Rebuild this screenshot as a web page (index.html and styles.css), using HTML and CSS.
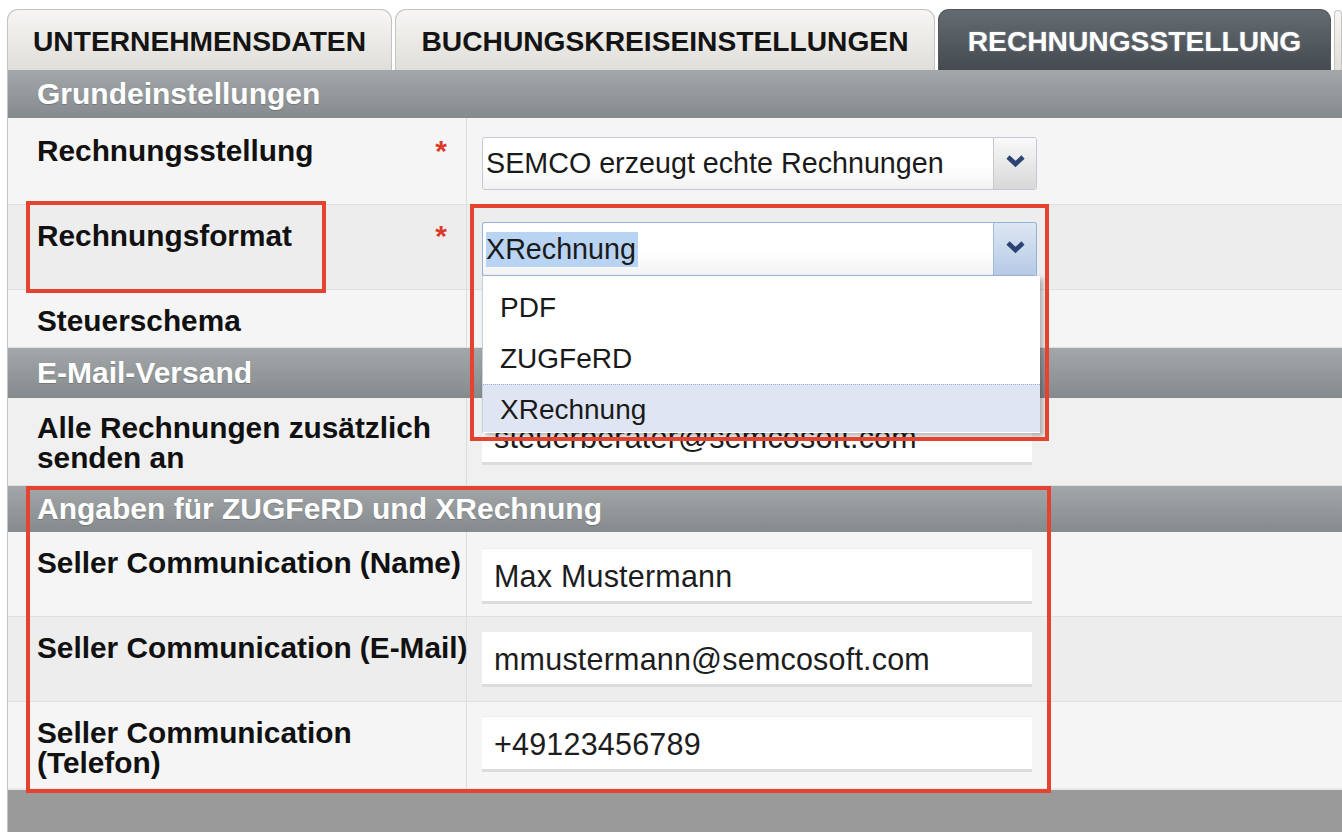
FILE: index.html
```html
<!DOCTYPE html>
<html lang="de">
<head>
<meta charset="utf-8">
<title>Rechnungsstellung</title>
<link rel="stylesheet" href="styles.css">
</head>
<body>
<div class="page">
  <div class="tabs">
    <div class="tab tab-1">UNTERNEHMENSDATEN</div>
    <div class="tab tab-2">BUCHUNGSKREISEINSTELLUNGEN</div>
    <div class="tab tab-3 active">RECHNUNGSSTELLUNG</div>
    <div class="tab tab-4"></div>
  </div>
  <div class="panel">
    <div class="section s1">Grundeinstellungen</div>
    <div class="row r1 light">
      <div class="label"><span>Rechnungsstellung</span><span class="req">*</span></div>
      <div class="field">
        <div class="select">
          <div class="select-value">SEMCO erzeugt echte Rechnungen</div>
          <div class="select-btn"><svg class="chev" width="21" height="14" viewBox="0 0 21 14"><polyline points="3,3 10.5,10 18,3" fill="none" stroke="#2b4474" stroke-width="4.6" stroke-linejoin="miter" stroke-linecap="butt"/></svg></div>
        </div>
      </div>
    </div>
    <div class="row r2 dark">
      <div class="label"><span>Rechnungsformat</span><span class="req">*</span></div>
      <div class="field">
        <div class="select open">
          <div class="select-value"><span class="hl">XRechnung</span></div>
          <div class="select-btn"><svg class="chev" width="21" height="14" viewBox="0 0 21 14"><polyline points="3,3 10.5,10 18,3" fill="none" stroke="#2b4474" stroke-width="4.6" stroke-linejoin="miter" stroke-linecap="butt"/></svg></div>
          <div class="options">
            <div class="option">PDF</div>
            <div class="option">ZUGFeRD</div>
            <div class="option selected">XRechnung</div>
          </div>
        </div>
      </div>
    </div>
    <div class="row r3 light">
      <div class="label"><span>Steuerschema</span></div>
      <div class="field"></div>
    </div>
    <div class="section s2">E-Mail-Versand</div>
    <div class="row r4 mid">
      <div class="label"><span>Alle Rechnungen zusätzlich<br>senden an</span></div>
      <div class="field"><div class="input">steuerberater@semcosoft.com</div></div>
    </div>
    <div class="section s3">Angaben für ZUGFeRD und XRechnung</div>
    <div class="row r5 light">
      <div class="label"><span>Seller Communication (Name)</span></div>
      <div class="field"><div class="input">Max Mustermann</div></div>
    </div>
    <div class="row r6 dark">
      <div class="label"><span>Seller Communication (E-Mail)</span></div>
      <div class="field"><div class="input">mmustermann@semcosoft.com</div></div>
    </div>
    <div class="row r7 light">
      <div class="label"><span>Seller Communication<br>(Telefon)</span></div>
      <div class="field"><div class="input">+49123456789</div></div>
    </div>
    <div class="footer"></div>
  </div>
  <div class="mark mark-label"></div>
  <div class="mark mark-select"></div>
  <div class="mark mark-section"></div>
</div>
</body>
</html>
```
FILE: styles.css
```css
* { box-sizing: border-box; }
html, body { margin: 0; padding: 0; }
body {
  background: #fff;
  font-family: "Liberation Sans", Arial, Helvetica, sans-serif;
  width: 1342px;
  height: 832px;
  overflow: hidden;
}
.page {
  position: relative;
  width: 1342px;
  height: 832px;
  padding-top: 8px;
}

/* Tabs */
.tabs {
  display: flex;
  height: 62px;
  padding-left: 7px;
  gap: 3px;
  align-items: flex-end;
}
.tab {
  height: 61px;
  display: flex;
  align-items: center;
  justify-content: center;
  font-weight: bold;
  font-size: 28.2px;
  color: #141414;
  background: linear-gradient(#f7f6f4, #e0ded9);
  border: 1px solid #c3c3c3;
  border-bottom: none;
  border-radius: 11px 11px 0 0;
  padding-top: 2px;
}
.tab-1 { width: 385px; }
.tab-2 { width: 540px; }
.tab-3 {
  width: 393px;
  background: linear-gradient(#646c72, #444a4f);
  border-color: #50565b;
  color: #fff;
  text-shadow: 0 0 2px rgba(255,255,255,0.35);
}
.tab-4 { flex: 1; height: 60px; }

/* Panel */
.panel {
  margin-left: 7px;
  border-left: 1px solid #c4c4c4;
}
.section {
  display: flex;
  align-items: center;
  padding-left: 29px;
  background: linear-gradient(#a3a7aa, #858a8d);
  color: #fff;
  font-weight: bold;
  font-size: 30px;
  text-shadow: 0 1px 1px rgba(0,0,0,0.2);
}
.s1 { height: 48px; }
.s2 { height: 50px; }
.s3 { height: 46px; }

.row {
  display: grid;
  grid-template-columns: 459px 1fr;
  border-bottom: 1px solid #e0e0e0;
}
.light { background: #f5f5f5; }
.dark { background: #ededed; }
.mid { background: #f0f0f0; }

.label {
  display: flex;
  justify-content: space-between;
  align-items: flex-start;
  padding: 16px 19px 0 29px;
  border-right: 1px solid #dddddd;
  font-weight: bold;
  font-size: 29.8px;
  line-height: 30px;
  color: #111;
  white-space: nowrap;
}
.req {
  color: #dc3b2b;
  font-size: 30px;
  line-height: 30px;
}
.field {
  padding: 16px 0 0 15px;
}

.r1 { height: 87px; }
.r1 .label { padding-top: 18px; }
.r1 .field { padding-top: 19px; }
.r2 { height: 85px; }
.r2 .field { padding-top: 17px; }
.r3 { height: 58px; }
.r4 { height: 88px; }
.r4 .label { padding-top: 15px; }
.r4 .field { padding-top: 12px; }
.r5 { height: 85px; }
.r5 .input { margin-top: 1px; }
.r6 { height: 85px; }
.r6 .field { padding-top: 15px; }
.r7 { height: 88px; border-bottom: 2px solid #e8e8e8; }
.r7 .field { padding-top: 15px; }

/* Select */
.select {
  position: relative;
  display: flex;
  width: 555px;
  height: 53px;
  border: 1px solid #c3c9d5;
  border-radius: 3px;
  background: linear-gradient(#ffffff 0%, #ffffff 55%, #f2f2f2 100%);
}
.select-value {
  flex: 1;
  display: flex;
  align-items: center;
  padding-left: 3px;
  font-size: 28.7px;
  color: #1a1a1a;
}
.select-btn {
  width: 43px;
  display: flex;
  align-items: center;
  justify-content: center;
  border-left: 1px solid #c8c8c8;
  border-radius: 0 3px 3px 0;
  background: linear-gradient(#f9f9f9, #d8d8d8);
  padding-bottom: 5px;
}
.chev { display: block; }
.select.open {
  height: 55px;
  border-color: #92b2dc;
  border-bottom: 2px solid #9ab7de;
}
.select.open .select-btn {
  background: linear-gradient(#dde7f4, #b6cae5);
  border-left-color: #a2bbdc;
}
.hl {
  background: #b9d3f2;
  padding: 1px 2px 1px 0;
}
.options {
  position: absolute;
  top: 53px;
  left: -1px;
  width: 558px;
  height: 157px;
  padding-top: 6px;
  background: #fff;
  border-left: 1px solid #c6d1e3;
  box-shadow: 3px 3px 5px rgba(0,0,0,0.3);
  z-index: 5;
}
.option {
  height: 51px;
  display: flex;
  align-items: center;
  padding-left: 17px;
  font-size: 28px;
  color: #1a1a1a;
}
.option.selected {
  height: 48px;
  padding-top: 2px;
  background: #dfe5f2;
  border-top: 1px dotted #9fb1d3;
}

/* Text input */
.input {
  width: 550px;
  height: 55px;
  display: flex;
  align-items: center;
  padding-left: 12px;
  padding-top: 3px;
  background: #fff;
  border-bottom: 3px solid #dcdcdc;
  box-shadow: 0 -1px 0 #ececec;
  font-size: 30.5px;
  letter-spacing: 0.2px;
  color: #1d1d1d;
}

.footer {
  height: 42px;
  background: #9a9a9a;
}

/* Red annotation boxes */
.mark {
  position: absolute;
  border: 4px solid #e4432f;
  z-index: 10;
}
.mark-label { left: 26px; top: 201px; width: 300px; height: 92px; }
.mark-select { left: 470px; top: 204px; width: 579px; height: 237px; }
.mark-section { left: 26px; top: 486px; width: 1025px; height: 307px; }
```
